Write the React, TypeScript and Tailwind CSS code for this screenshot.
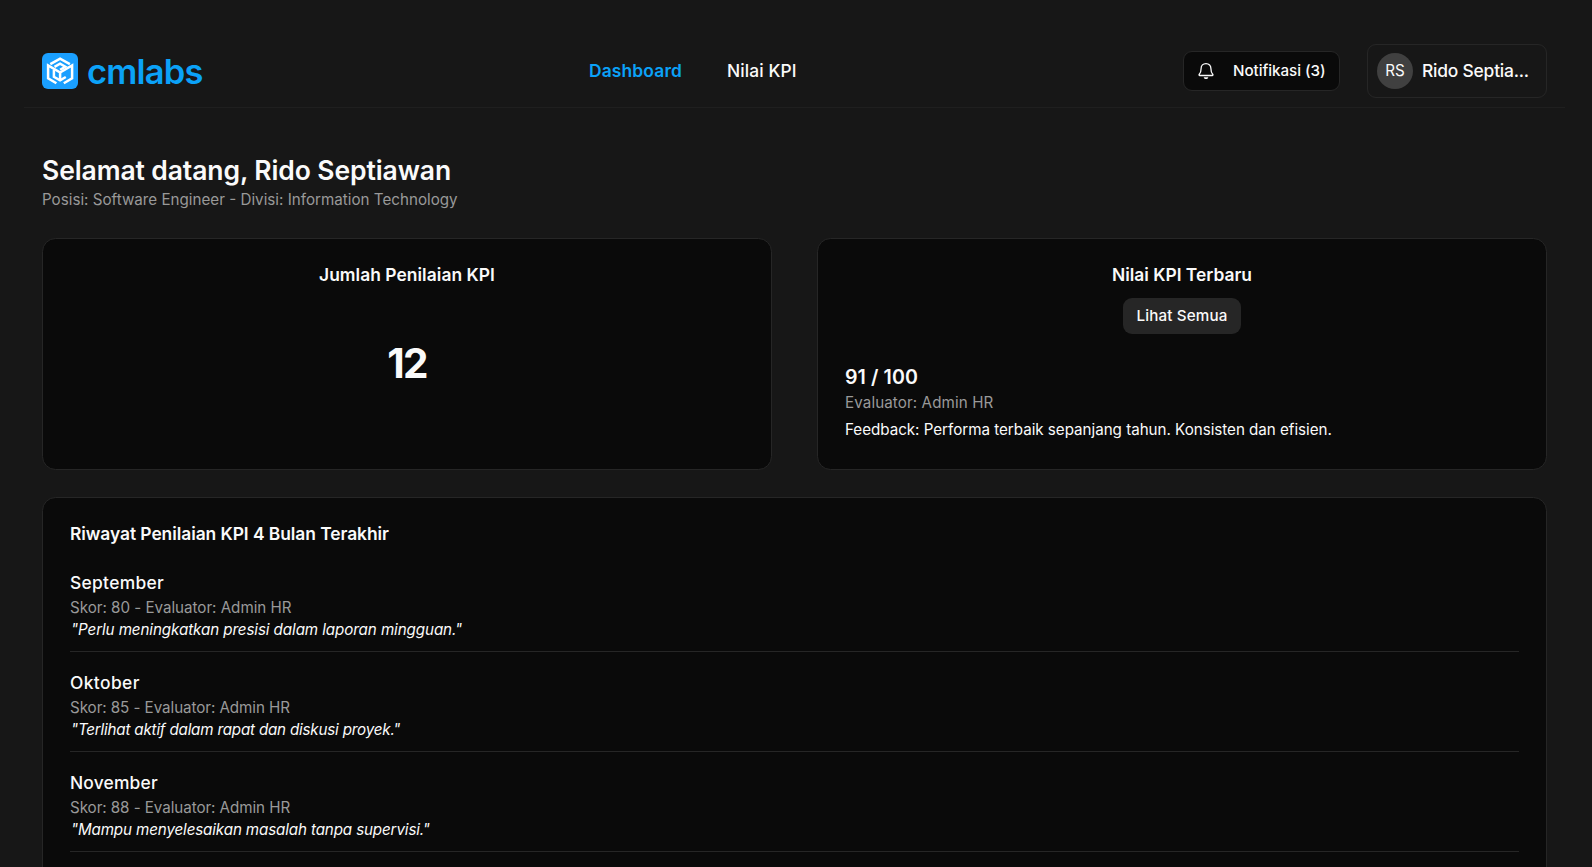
const history = [
  { month: "September", monthTracking: "tracking-[0.3px]", score: 80, scoreTracking: "tracking-[-0.03px]", note: "Perlu meningkatkan presisi dalam laporan mingguan.", noteTracking: "tracking-[-0.1px]" },
  { month: "Oktober", monthTracking: "tracking-[0.4px]", score: 85, scoreTracking: "tracking-[-0.07px]", note: "Terlihat aktif dalam rapat dan diskusi proyek.", noteTracking: "tracking-[-0.2px]" },
  { month: "November", monthTracking: "tracking-[0.18px]", score: 88, scoreTracking: "tracking-[-0.07px]", note: "Mampu menyelesaikan masalah tanpa supervisi.", noteTracking: "tracking-[-0.14px]" },
];

function Logo() {
  return (
    <svg className="size-9 shrink-0" viewBox="0 0 36 36" fill="none">
      <rect width="36" height="36" rx="6" fill="#1a9fff" />
      <g stroke="#fff" strokeWidth="2.5">
        <path d="M8.3 11.2 18.1 5.7l9.8 5.5" />
        <path d="M14.4 30.3 6.1 25.2V12.4l12 7.1v7.7" />
        <path d="M21.800 30.300 30.100 25.200V12.400L18.100 19.500" />
        <path d="M11.900 17v6.800l6.200 3.500 5.700-3.300" />
        <path d="M12.500 13.900 18.100 10.700l5.200 3-5.200 3.100" />
      </g>
    </svg>
  );
}

function BellIcon() {
  return (
    <svg className="h-[18px] w-[18px] shrink-0" viewBox="0 0 18 18" fill="none">
      <path
        d="M9 1.700c-3 0-4.900 2-4.900 4.800 0 3.100-.6 4.500-1.800 5.700-.5.600-.3 1.300.5 1.300h12.400c.8 0 1-.7.5-1.300-1.200-1.200-1.800-2.600-1.800-5.700C13.900 3.700 12 1.700 9 1.700Z"
        stroke="#fafafa"
        strokeWidth="1.3"
      />
      <path d="M6.700 15.200h4.600c-.3 1.200-1.100 1.900-2.300 1.900s-2-.7-2.300-1.900Z" fill="#fafafa" />
    </svg>
  );
}

export default function App() {
  return (
    <div className="h-[867px] overflow-hidden bg-[#171717] pl-6 pr-[27px] font-['Inter',sans-serif] text-[#fafafa]">
      <header className="grid h-[108px] grid-cols-[547px_1fr_auto] items-end border-b border-[#1f1f1f] px-[18px] pb-[9px]">
        <div className="flex h-[54px] items-center gap-[9px]">
          <Logo />
          <span className="pt-px text-[34.5px] font-semibold leading-9 tracking-[-0.8px] text-[#0ba2f8]">cmlabs</span>
        </div>
        <nav className="flex h-[54px] items-center gap-[45px] text-[17.4px]">
          <a className="font-semibold tracking-[0.15px] text-[#0ba2f8]">Dashboard</a>
          <a className="font-medium tracking-[0.09px]">Nilai KPI</a>
        </nav>
        <div className="flex h-[54px] items-center gap-[27px]">
          <button className="flex h-10 w-[157px] items-center rounded-[9px] border border-[#262626] bg-[#0a0a0a] pl-[13px]">
            <BellIcon />
            <span className="ml-[18px] whitespace-nowrap text-[15.2px] font-medium tracking-[-0.05px]">Notifikasi (3)</span>
          </button>
          <div className="flex h-[54px] w-[180px] items-center gap-[9px] rounded-[9px] border border-[#262626] px-[9px]">
            <span className="flex size-9 shrink-0 items-center justify-center rounded-full bg-[#404040] text-[15.2px]">RS</span>
            <span className="whitespace-nowrap text-[17.4px] font-medium tracking-[-0.2px]">Rido Septia...</span>
          </div>
        </div>
      </header>

      <main className="px-[18px] pt-11">
        <h1 className="h-9 text-[26.5px] font-semibold leading-9 tracking-[-0.105px]">Selamat datang, Rido Septiawan</h1>
        <p className="mt-px text-[15.2px] leading-[22px] text-[#999]">
          Posisi: Software Engineer - Divisi: Information Technology
        </p>

        <section className="mt-[27px] grid grid-cols-2 gap-[45px]">
          <div className="flex h-[232px] flex-col items-center rounded-[13.5px] border border-[#262626] bg-[#0a0a0a] pt-[22px]">
            <h2 className="text-[17.4px] font-semibold leading-7 tracking-[0.055px]">Jumlah Penilaian KPI</h2>
            <p className="mt-12 text-[40.5px] font-bold leading-[54px] tracking-[-1.8px]">12</p>
          </div>
          <div className="h-[232px] rounded-[13.5px] border border-[#262626] bg-[#0a0a0a] px-[27px] pt-[22px]">
            <div className="flex flex-col items-center">
              <h2 className="text-[17.4px] font-semibold leading-7">Nilai KPI Terbaru</h2>
              <button className="mt-[9px] h-9 w-[118px] rounded-[9px] bg-[#262626] text-[15.2px] font-medium tracking-[0.15px]">
                Lihat Semua
              </button>
            </div>
            <p className="mt-[29px] text-[19.6px] font-semibold leading-7 tracking-[0.09px]">91 / 100</p>
            <p className="mt-px text-[15.2px] leading-[22px] tracking-[0.09px] text-[#999]">Evaluator: Admin HR</p>
            <p className="mt-[5px] text-[15.2px] leading-[22px] tracking-[-0.03px]">
              Feedback: Performa terbaik sepanjang tahun. Konsisten dan efisien.
            </p>
          </div>
        </section>

        <section className="mt-[27px] h-[440px] rounded-[13.5px] border border-[#262626] bg-[#0a0a0a] px-[27px] pt-[22px]">
          <h2 className="text-[17.4px] font-semibold leading-7 tracking-[-0.05px]">Riwayat Penilaian KPI 4 Bulan Terakhir</h2>
          <ul className="mt-[21px]">
            {history.map((h) => (
              <li key={h.month} className="mb-[17px] h-[83px] border-b border-[#262626]">
                <h3 className={`text-[17.4px] font-medium leading-7 ${h.monthTracking}`}>{h.month}</h3>
                <p className={`text-[15.2px] leading-[22px] text-[#999] ${h.scoreTracking}`}>
                  Skor: {h.score} - Evaluator: Admin HR
                </p>
                <p className={`pl-px text-[15.2px] italic leading-[22px] ${h.noteTracking}`}>"{h.note}"</p>
              </li>
            ))}
          </ul>
        </section>
      </main>
    </div>
  );
}
